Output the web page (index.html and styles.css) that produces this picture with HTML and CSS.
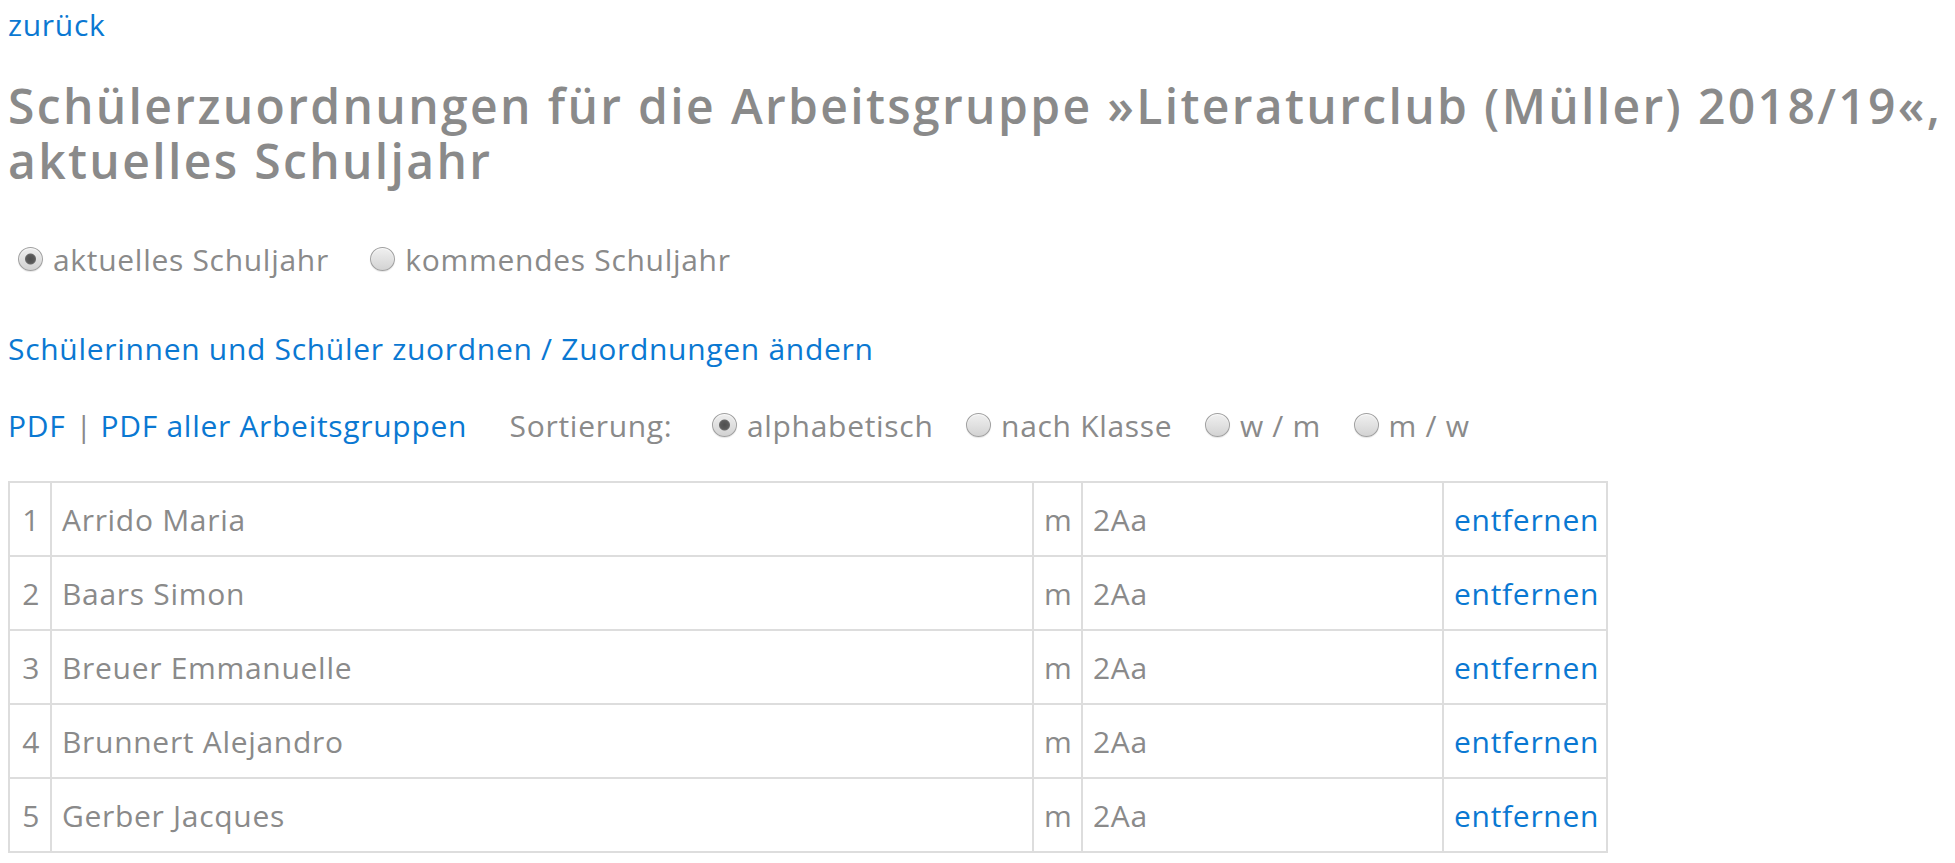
FILE: index.html
```html
<!DOCTYPE html>
<html lang="de">
<head>
<meta charset="utf-8">
<title>Schülerzuordnungen</title>
<link rel="stylesheet" href="styles.css">
</head>
<body>
<div class="page">
  <a class="back" href="#">zurück</a>
  <h1 class="title">Schülerzuordnungen für die Arbeitsgruppe »Literaturclub (Müller) 2018/19«,<br>aktuelles Schuljahr</h1>
  <div class="year-switch">
    <label class="opt"><input type="radio" name="jahr" checked><span class="opt-text">aktuelles Schuljahr</span></label>
    <label class="opt"><input type="radio" name="jahr"><span class="opt-text">kommendes Schuljahr</span></label>
  </div>
  <div class="assign"><a href="#">Schülerinnen und Schüler zuordnen / Zuordnungen ändern</a></div>
  <div class="toolbar">
    <a href="#">PDF</a><span class="sep">|</span><a href="#">PDF aller Arbeitsgruppen</a>
    <span class="sort-label">Sortierung:</span>
    <label class="sort-opt"><input type="radio" name="sort" checked><span class="opt-text">alphabetisch</span></label>
    <label class="sort-opt"><input type="radio" name="sort"><span class="opt-text">nach Klasse</span></label>
    <label class="sort-opt"><input type="radio" name="sort"><span class="opt-text">w / m</span></label>
    <label class="sort-opt"><input type="radio" name="sort"><span class="opt-text">m / w</span></label>
  </div>
  <table class="students">
    <colgroup>
      <col class="c-num"><col class="c-name"><col class="c-sex"><col class="c-class"><col class="c-act">
    </colgroup>
    <tbody>
      <tr><td class="num">1</td><td>Arrido Maria</td><td>m</td><td>2Aa</td><td><a href="#">entfernen</a></td></tr>
      <tr><td class="num">2</td><td>Baars Simon</td><td>m</td><td>2Aa</td><td><a href="#">entfernen</a></td></tr>
      <tr><td class="num">3</td><td>Breuer Emmanuelle</td><td>m</td><td>2Aa</td><td><a href="#">entfernen</a></td></tr>
      <tr><td class="num">4</td><td>Brunnert Alejandro</td><td>m</td><td>2Aa</td><td><a href="#">entfernen</a></td></tr>
      <tr><td class="num">5</td><td>Gerber Jacques</td><td>m</td><td>2Aa</td><td><a href="#">entfernen</a></td></tr>
    </tbody>
  </table>
</div>
</body>
</html>
```

FILE: styles.css
```css
html, body {
  margin: 0;
  padding: 0;
  background: #ffffff;
}

body {
  font-family: "Open Sans", "Liberation Sans", sans-serif;
  font-size: 30px;
  letter-spacing: 0.7px;
  color: #8a8a8a;
}

a {
  color: #0a78d2;
  text-decoration: none;
}

.page {
  padding: 5px 8px 0 8px;
}

.back {
  display: block;
  line-height: 40px;
}

.title {
  margin: 33px 0 0 0;
  font-size: 48px;
  font-weight: 600;
  letter-spacing: 2.35px;
  line-height: 55px;
  white-space: nowrap;
  color: #8a8a8a;
}

.year-switch {
  margin-top: 52px;
  line-height: 40px;
  padding-left: 10px;
}

.opt {
  display: inline-block;
  margin-right: 33px;
}

.opt-text {
  margin-left: 10px;
}

input[type="radio"] {
  -webkit-appearance: none;
  appearance: none;
  width: 25px;
  height: 24px;
  margin: 0;
  vertical-align: baseline;
  border-radius: 50%;
  border: 1px solid #a0a0a0;
  background: linear-gradient(#f0f0f0, #d3d3d3);
  box-shadow: inset 0 1px 1px rgba(255,255,255,0.8), 0 1px 1px rgba(0,0,0,0.1);
}

input[type="radio"]:checked {
  background: radial-gradient(circle at 50% 50%, #4f4f4f 0, #5a5a5a 4px, #6a6a6a 5px, transparent 6px), linear-gradient(#eeeeee, #d2d2d2);
}

.assign {
  margin-top: 49px;
  line-height: 40px;
}

.toolbar {
  margin-top: 37px;
  line-height: 40px;
}

.sep {
  margin: 0 8px 0 10px;
}

.sort-label {
  margin-left: 34px;
  margin-right: 31px;
}

.sort-opt {
  display: inline-block;
  margin-right: 24px;
}

.students {
  margin-top: 35px;
  border-collapse: collapse;
  table-layout: fixed;
  width: 1598px;
  border: 2px solid #dddddd;
}

.c-num { width: 42px; }
.c-name { width: 982px; }
.c-sex { width: 49px; }
.c-class { width: 361px; }
.c-act { width: 164px; }

.students td {
  border: 2px solid #dddddd;
  padding: 17px 10px 15px 10px;
  line-height: 40px;
  white-space: nowrap;
}

.students td.num {
  text-align: right;
}
```
